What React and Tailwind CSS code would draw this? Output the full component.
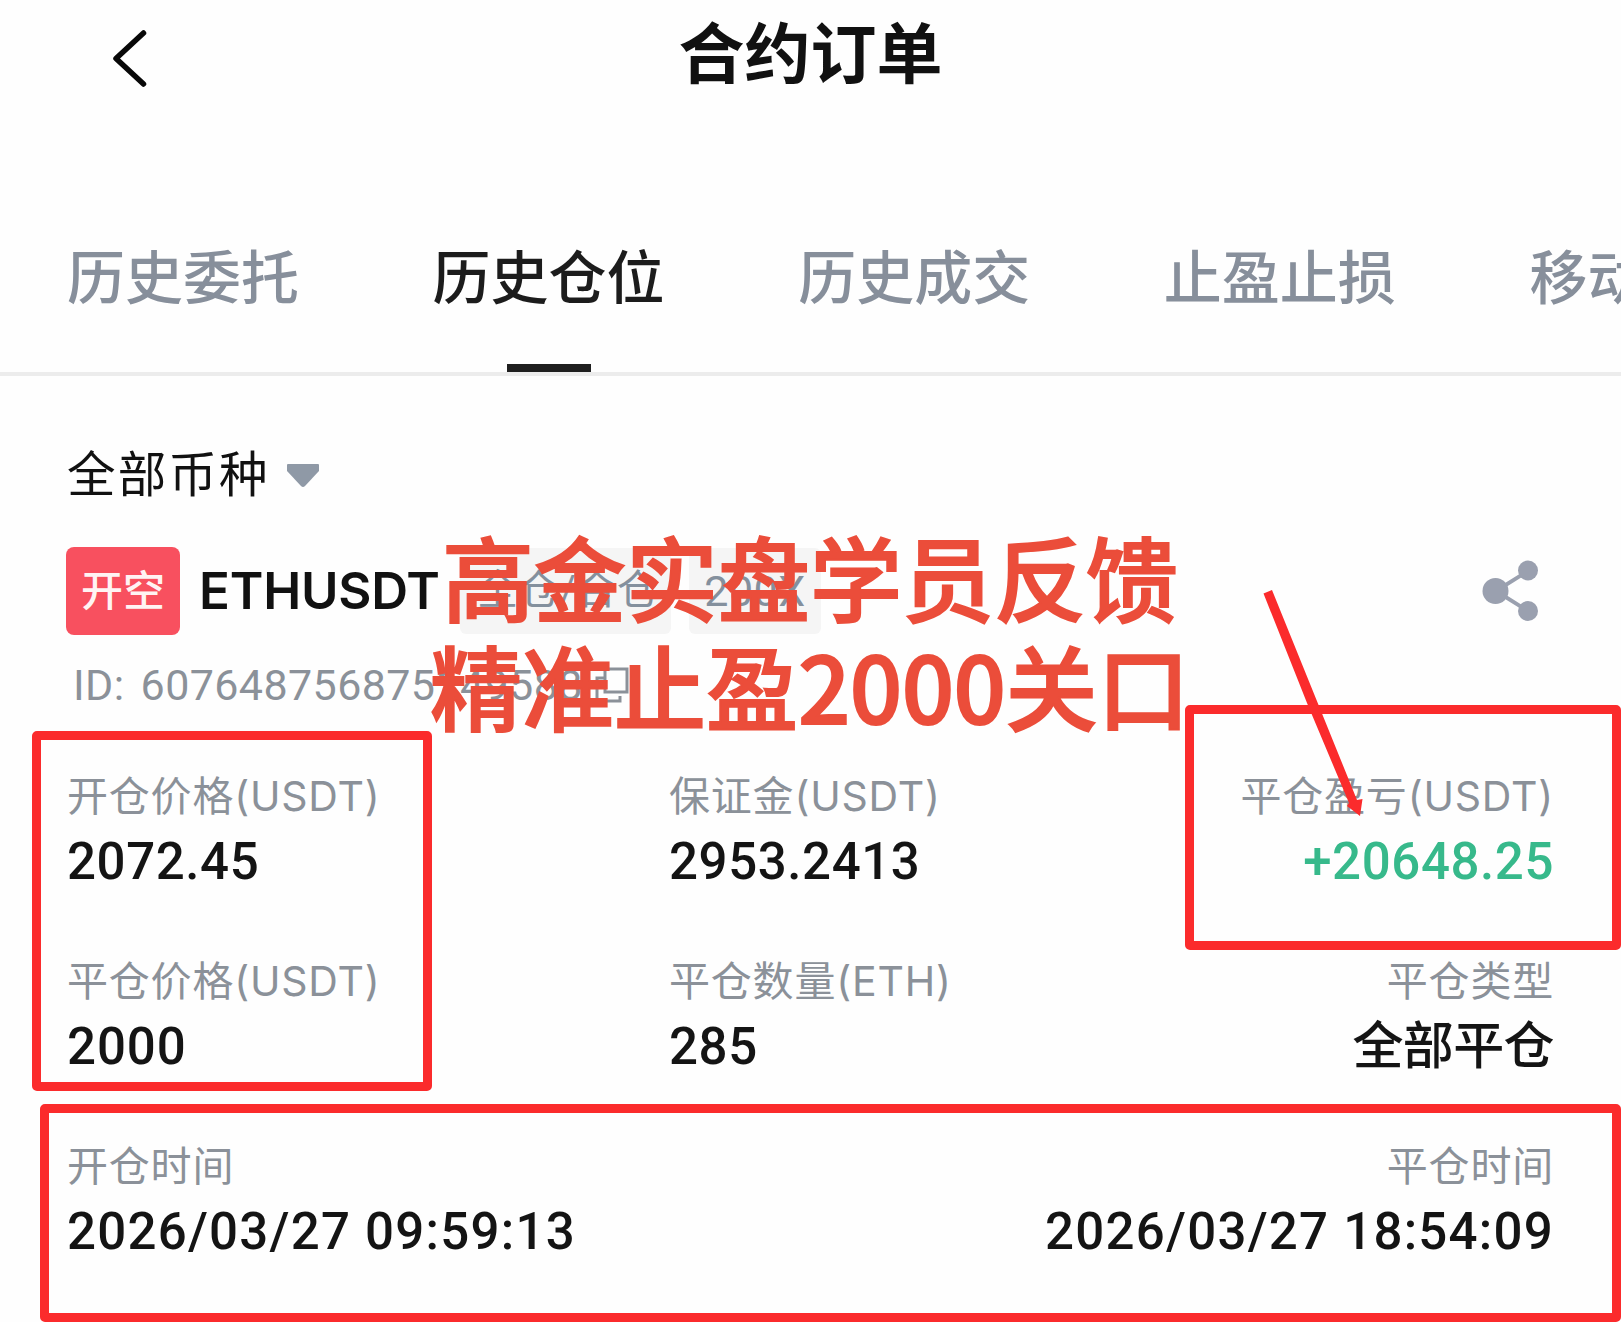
const tabs = ['历史委托', '历史仓位', '历史成交', '止盈止损', '移动止盈止损'];

const rows = [
  [
    { label: '开仓价格(USDT)', value: '2072.45', valueClass: 'tracking-[0.6px] text-[#141414]' },
    { label: '保证金(USDT)', value: '2953.2413', valueClass: 'tracking-[0.6px] text-[#141414]' },
    { label: '平仓盈亏(USDT)', value: '+20648.25', valueClass: 'tracking-[0.6px] text-[#37b98b]' },
  ],
  [
    { label: '平仓价格(USDT)', value: '2000', valueClass: 'tracking-[0.9px] text-[#141414]' },
    { label: '平仓数量(ETH)', value: '285', valueClass: 'tracking-[0.6px] text-[#141414]' },
    { label: '平仓类型', value: '全部平仓', valueClass: 'tracking-[-0.6px] text-[#141414]' },
  ],
];

const dateClass = 'tracking-[1.25px] text-[#141414]';

const Field = ({ label, value, valueClass, right }) => (
  <div className={right ? 'flex flex-col items-end' : 'flex flex-col items-start'}>
    <span className="font-[Inter,'Noto_Sans_CJK_SC',sans-serif] text-[41px] leading-[56px] tracking-[0.8px] text-[#8b9199]">{label}</span>
    <span className={`mt-[3px] text-[51px] font-medium leading-[70px] ${valueClass}`}>{value}</span>
  </div>
);

const App = () => {
  return (
    <div className="relative h-[1322px] w-[1621px] overflow-hidden bg-[#fefefe] font-[Roboto,'Noto_Sans_CJK_SC',sans-serif]">
      {/* Header */}
      <header className="grid h-[212px] grid-cols-3 items-start px-[104px]">
        <svg className="mt-[25px]" width="50" height="66" viewBox="0 0 50 66" fill="none">
          <path d="M39.5 8 L12 33.5 L39.5 59" stroke="#080808" strokeWidth="5.5" strokeLinecap="round" strokeLinejoin="round" />
        </svg>
        <h1 className="mt-[12px] text-center text-[66px] font-bold leading-[88px] text-[#111]">合约订单</h1>
      </header>

      {/* Tabs */}
      <nav className="flex h-[164px] gap-[133.6px] border-b-4 border-[#ececec] pl-[67px]">
        {tabs.map((tab, i) => (
          <div
            key={tab}
            className={
              i === 1
                ? 'flex shrink-0 flex-col items-center justify-between text-[58px] font-medium text-[#1c1c1c]'
                : 'flex shrink-0 flex-col items-center justify-between text-[58px] font-medium text-[#878f9b]'
            }
          >
            <span className="mt-[27px] whitespace-nowrap leading-[80px]">{tab}</span>
            {i === 1 && <span className="h-2 w-[84px] bg-[#1f1f1f]" />}
          </div>
        ))}
      </nav>

      <main className="px-[67px]">
        {/* Coin filter */}
        <div className="flex h-[171px] items-center gap-[17px] pt-[29px]">
          <span className="text-[48.5px] leading-[70px] tracking-[2.2px] text-[#111]">全部币种</span>
          <svg width="32" height="24" viewBox="0 0 32 24">
            <path d="M1 0 H31 Q32 0 32 1 V7 L18 22 Q16 24 14 22 L0 7 V1 Q0 0 1 0 Z" fill="#8f99a6" />
          </svg>
        </div>

        {/* Position title */}
        <div className="-ml-px flex h-[88px] items-center">
          <span className="flex h-[88px] w-[114px] items-center justify-center rounded-lg bg-[#f8505f] text-[42px] font-medium text-[#fff3f3]">开空</span>
          <span className="ml-[19px] w-[261px] font-[Inter,sans-serif] text-[51px] font-semibold tracking-[-0.2px] text-[#111]">ETHUSDT</span>
          <span className="flex h-[86px] w-[211px] items-center justify-center rounded-md bg-[#f5f5f5] pl-1 text-[41px] text-[#84909d]">全仓/合仓</span>
          <span className="ml-[18px] flex h-[86px] w-[132px] items-center justify-center rounded-md bg-[#f5f5f5] text-[43px] tracking-[0.5px] text-[#84909d]">200X</span>
          <svg className="ml-auto mr-[14px]" width="58" height="62" viewBox="0 0 58 62" fill="#9aa0af">
            <path d="M14 31 L46 11 M14 31 L46 51" stroke="#9aa0af" strokeWidth="4" />
            <circle cx="13.5" cy="31" r="13" />
            <circle cx="46" cy="10.5" r="10" />
            <circle cx="46" cy="51" r="10" />
          </svg>
        </div>

        <div className="flex h-[100px] items-center gap-3 pl-1.5 text-[43px] tracking-[0.4px] text-[#8b9199]">
          <span className="[word-spacing:5px]">ID: 607648756875149588</span>
          <svg width="34" height="36" viewBox="0 0 34 36" fill="none" stroke="#8b9199" strokeWidth="3">
            <path d="M10 2 H32 V25 H10 Z M10 11 H2 V34 H25 V29" />
          </svg>
        </div>

        {/* Details */}
        <div className="grid grid-cols-[602px_1fr_1fr] gap-y-[56px] pt-[33px]">
          {rows.map((row) =>
            row.map((field, i) => <Field key={field.label} {...field} right={i === 2} />)
          )}
        </div>
        <div className="mt-[56px] flex justify-between">
          <Field label="开仓时间" value="2026/03/27 09:59:13" valueClass={dateClass} />
          <Field label="平仓时间" value="2026/03/27 18:54:09" valueClass={dateClass} right />
        </div>
      </main>

      {/* Highlight boxes */}
      <div className="absolute left-[32px] top-[731px] h-[360px] w-[400px] rounded-[5px] border-[9px] border-[#fb2b2c]" />
      <div className="absolute left-[1185px] top-[705px] h-[245px] w-[436px] rounded-[5px] border-[9px] border-[#fb2b2c]" />
      <div className="absolute left-[40px] top-[1104px] h-[218px] w-[1581px] rounded-[5px] border-[9px] border-[#fb2b2c]" />

      <svg className="absolute left-[1255px] top-[580px]" width="120" height="250" viewBox="0 0 120 250">
        <path d="M8.5 13.5 L17 10 L102 220 L107.5 219 L105 236 L92 226 L94 223 L52 123 Z" fill="#fb2b2c" />
      </svg>

      {/* Caption */}
      <div className="absolute left-[430px] top-[520px] w-[756px] whitespace-nowrap text-center font-['Noto_Sans_CJK_SC',sans-serif] text-[92px] font-medium leading-[109px] text-[#eb4d3a] [-webkit-text-stroke:1.8px_#eb4d3a]">
        <p className="pl-1">高金实盘学员反馈</p>
        <p className="pr-1">
          精准止盈<span className="tracking-[-0.6px]">2000</span>关口
        </p>
      </div>
    </div>
  );
};

export default App;
